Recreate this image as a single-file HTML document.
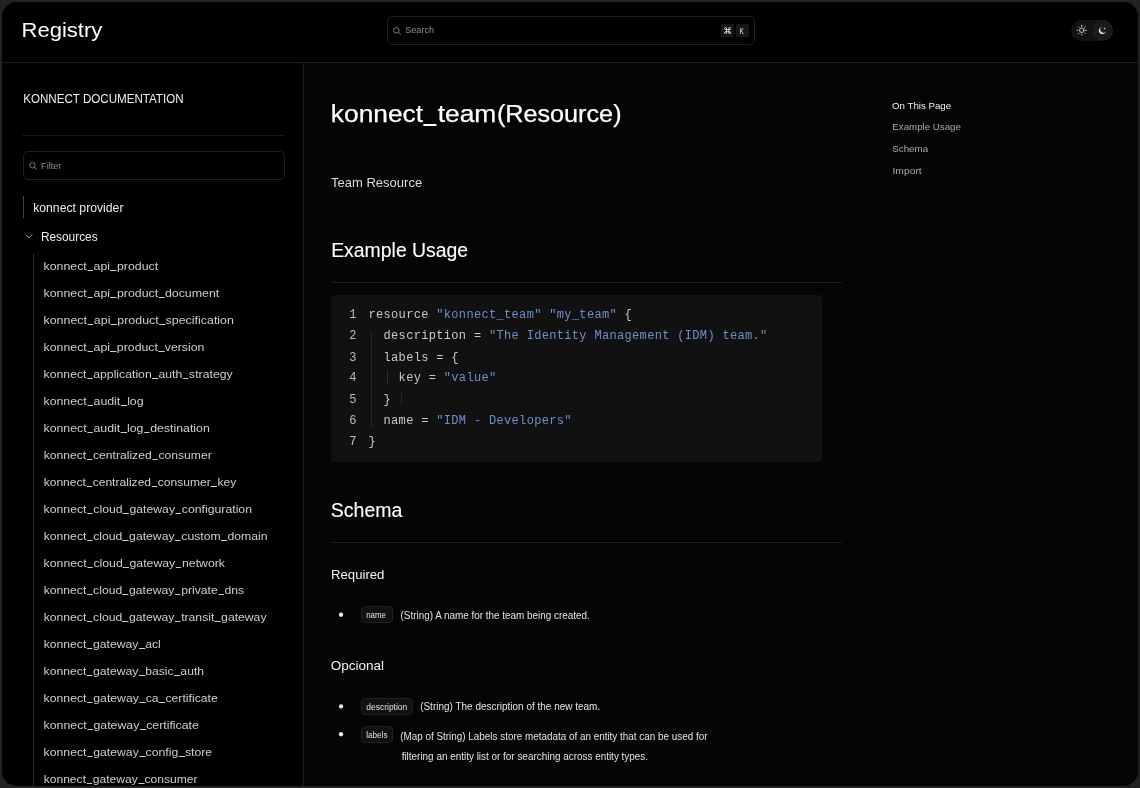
<!DOCTYPE html>
<html>
<head>
<meta charset="utf-8">
<style>
*{box-sizing:border-box;margin:0;padding:0}
html,body{width:1140px;height:788px;overflow:hidden;background:#222;font-family:"Liberation Sans",sans-serif;color:#fff}
#win{position:absolute;left:2px;top:2px;width:1136px;height:784px;border-radius:15px;background:#000;overflow:hidden}
#in{position:absolute;left:-2px;top:-2px;width:1140px;height:788px;will-change:transform}
.t{position:absolute;white-space:nowrap;line-height:20px;transform-origin:0 0}
#h1a,#h1b{-webkit-text-stroke:0.25px #fff}
#exu,#sch{-webkit-text-stroke:0.12px #fff}
.b{position:absolute}
.u{display:inline-block;width:.5em;margin:0 .028em;height:.085em;background:currentColor;position:relative;top:.07em}
#h1a .u{top:.18em}
#hdr{position:absolute;left:0;top:0;width:1140px;height:63px;border-bottom:1px solid #1d1d1d;background:#000}
#search{position:absolute;left:387px;top:16px;width:368px;height:29px;border:1px solid #202020;border-radius:5px}
.kbd{position:absolute;top:24px;width:13px;height:13px;background:#161616}
#toggle{position:absolute;left:1071px;top:20px;width:42px;height:21px;border-radius:10.5px;background:#121212}
#toggle .on{position:absolute;left:21px;top:0;width:21px;height:21px;border-radius:10.5px;background:#1b1b1b}
#side{position:absolute;left:0;top:63px;width:304px;height:725px;border-right:1px solid #1d1d1d;background:#000}
#main{position:absolute;left:304px;top:63px;width:836px;height:725px;background:#050505}
#sdiv{position:absolute;left:23px;top:135px;width:261px;height:1px;background:repeating-linear-gradient(90deg,#262626 0 1px,#0c0c0c 1px 2px)}
#filter{position:absolute;left:23px;top:151px;width:262px;height:29px;border:1px solid #202020;border-radius:5px}
.vline{position:absolute;width:1px;background:#333}
.hr{position:absolute;left:331px;width:511px;height:1px;background:repeating-linear-gradient(90deg,#212121 0 2px,#181818 2px 4px)}
#code{position:absolute;left:331px;top:295px;width:491px;height:167px;border-radius:4px;background:#111}
#code .ln,#code .cl{position:absolute;font-family:"Liberation Mono",monospace;font-size:12px;letter-spacing:0.33px;line-height:20px;white-space:pre;color:#c9c9c9}
#code .ln{color:#bcbcbc}
#code .s{color:#6c90cb}
.tag{position:absolute;height:17px;border:1px solid #1f1f1f;border-radius:3.5px;background:#111}
.dot{position:absolute;width:4.4px;height:4.4px;border-radius:2.2px;background:#f4f4f4}
</style>
</head>
<body>
<div id="win"><div id="in">
<div id="main"></div>
<div id="side"></div>
<div id="hdr"></div>
<div id="search"></div>
<svg class="b" style="left:392px;top:26px" width="10" height="10" viewBox="0 0 10 10"><circle cx="4.4" cy="4.3" r="2.75" fill="none" stroke="#909090" stroke-width="0.85"/><path d="M6.5 6.4 L8.5 8.3" stroke="#909090" stroke-width="0.85" stroke-linecap="round"/></svg>
<div class="kbd" style="left:721px"></div>
<div class="kbd" style="left:736px"></div>
<svg class="b" style="left:723.6px;top:26.8px" width="7.3" height="7.3" viewBox="0 0 7.6 7.6" fill="none" stroke="#ececec" stroke-width="0.8"><circle cx="1.6" cy="1.6" r="1.05"/><circle cx="6.0" cy="1.6" r="1.05"/><circle cx="1.6" cy="6.0" r="1.05"/><circle cx="6.0" cy="6.0" r="1.05"/><path d="M2.65 1.6V6.0M4.95 1.6V6.0M1.6 2.65H6.0M1.6 4.95H6.0"/></svg>
<div id="toggle"><div class="on"></div>
<svg class="b" style="left:0;top:0" width="42" height="21" viewBox="0 0 42 21" fill="none" stroke="#e6e6e6" stroke-width="0.85" stroke-linecap="round">
<circle cx="10.75" cy="10.25" r="2.25"/>
<path d="M14.65 10.25L15.50 10.25M13.51 13.01L14.11 13.61M10.75 14.15L10.75 15.00M7.99 13.01L7.39 13.61M6.85 10.25L6.00 10.25M7.99 7.49L7.39 6.89M10.75 6.65L10.75 5.15M13.51 7.49L14.11 6.89"/>
<path d="M29.96 7.42A3.45 3.45 0 1 0 34.48 11.94A3.2 3.2 0 0 1 29.96 7.42Z" fill="#e4e4e4" stroke="#e4e4e4" stroke-width="0.25" stroke-linejoin="round"/>
<circle cx="33.58" cy="8.50" r="0.8" fill="#e6e6e6" stroke="none"/>
</svg>
</div>

<div id="sdiv"></div>
<div id="filter"></div>
<svg class="b" style="left:28px;top:161px" width="10" height="10" viewBox="0 0 10 10"><circle cx="4.4" cy="4.3" r="2.75" fill="none" stroke="#909090" stroke-width="0.85"/><path d="M6.5 6.4 L8.5 8.3" stroke="#909090" stroke-width="0.85" stroke-linecap="round"/></svg>
<div class="vline" style="left:23px;top:196px;height:22px;background:#424242"></div>
<svg class="b" style="left:24px;top:233px" width="10" height="7" viewBox="0 0 10 7"><path d="M1.6 1.5L5 4.9L8.4 1.5" fill="none" stroke="#b0b0b0" stroke-width="0.9"/></svg>
<div class="vline" style="left:33px;top:253px;height:535px;background:#2c2c2c"></div>

<div class="hr" style="top:282px"></div>
<div id="code">
<div class="ln" style="left:18.3px;top:10.00px">1</div><div class="cl" style="left:37.5px;top:10.00px">resource <span class="s">"konnect_team"</span> <span class="s">"my_team"</span> {</div>
<div class="ln" style="left:18.3px;top:31.13px">2</div><div class="cl" style="left:37.5px;top:31.13px">  description = <span class="s">"The Identity Management (IDM) team."</span></div>
<div class="ln" style="left:18.3px;top:53.00px">3</div><div class="cl" style="left:37.5px;top:53.00px">  labels = {</div>
<div class="ln" style="left:18.3px;top:73.39px">4</div><div class="cl" style="left:37.5px;top:73.39px">    key = <span class="s">"value"</span></div>
<div class="ln" style="left:18.3px;top:94.52px">5</div><div class="cl" style="left:37.5px;top:94.52px">  }</div>
<div class="ln" style="left:18.3px;top:115.65px">6</div><div class="cl" style="left:37.5px;top:115.65px">  name = <span class="s">"IDM - Developers"</span></div>
<div class="ln" style="left:18.3px;top:136.78px">7</div><div class="cl" style="left:37.5px;top:136.78px">}</div>
<div class="vline" style="left:40px;top:36px;height:96px;background:#262626"></div>
<div class="vline" style="left:56px;top:75px;height:14px;background:#2e2e2e"></div>
<div class="vline" style="left:70px;top:98px;height:12px;background:#262626"></div>
</div>
<div class="hr" style="top:542px"></div>

<svg class="b" style="left:336px;top:610px" width="10" height="10"><circle cx="5.0" cy="4.75" r="2.15" fill="#f2f2f2"/></svg>
<div class="tag" style="left:361px;top:606px;width:32px"></div>
<svg class="b" style="left:336px;top:701px" width="10" height="10"><circle cx="5.05" cy="5.4" r="2.15" fill="#f2f2f2"/></svg>
<div class="tag" style="left:361px;top:698px;width:52px"></div>
<svg class="b" style="left:336px;top:729px" width="10" height="10"><circle cx="5.05" cy="5.25" r="2.15" fill="#f2f2f2"/></svg>
<div class="tag" style="left:361px;top:726px;width:32px"></div>

<div id="logo" class="t" style="left:21px;top:20.42px;font-size:21px;color:#fff;transform:translateX(0.58px) scaleX(1.0483)">Registry</div>
<div id="tsearch" class="t" style="left:405px;top:20.44px;font-size:9.7px;color:#8e8e8e;transform:translateX(0.19px) scaleX(0.9411)">Search</div>
<div id="kk" class="t" style="left:739px;top:20.77px;font-size:9.9px;color:#e8e8e8;transform:translateX(0.57px) scaleX(0.6545)">K</div>
<div id="kd" class="t" style="left:23px;top:88.94px;font-size:12.3px;color:#f0f0f0;transform:translateX(0.25px) scaleX(0.9421)">KONNECT DOCUMENTATION</div>
<div id="tfilter" class="t" style="left:41px;top:156.01px;font-size:9.5px;color:#8e8e8e;transform:translateX(0.00px) scaleX(0.9725)">Filter</div>
<div id="prov" class="t" style="left:33px;top:197.54px;font-size:12.0px;color:#ededed;transform:translateX(0.14px) scaleX(1.0184)">konnect provider</div>
<div id="res" class="t" style="left:40px;top:227.44px;font-size:12.3px;color:#ededed;transform:translateX(0.90px) scaleX(0.9657)">Resources</div>
<div id="h1a" class="t" style="left:330px;top:104.01px;font-size:24.2px;color:#fff;transform:translateX(0.83px) scaleX(1.0886)">konnect<i class="u"></i>team</div>
<div id="h1b" class="t" style="left:496px;top:104.01px;font-size:24.2px;color:#fff;transform:translateX(0.88px) scaleX(1.0419)">(Resource)</div>
<div id="team" class="t" style="left:331px;top:172.93px;font-size:13.2px;color:#dcdcdc;transform:translateX(0.03px) scaleX(0.9864)">Team Resource</div>
<div id="exu" class="t" style="left:331px;top:239.52px;font-size:20px;color:#fff;transform:translateX(0.17px) scaleX(0.9703)">Example Usage</div>
<div id="sch" class="t" style="left:330px;top:499.67px;font-size:20px;color:#fff;transform:translateX(0.78px) scaleX(0.9760)">Schema</div>
<div id="req" class="t" style="left:330px;top:564.52px;font-size:13.5px;color:#f2f2f2;transform:translateX(0.98px) scaleX(0.9752)">Required</div>
<div id="opc" class="t" style="left:330px;top:656.17px;font-size:13.5px;color:#f2f2f2;transform:translateX(0.74px) scaleX(0.9987)">Opcional</div>
<div id="p1" class="t" style="left:400px;top:605.83px;font-size:10px;color:#e2e2e2;transform:translateX(0.52px) scaleX(0.9902)">(String) A name for the team being created.</div>
<div id="p2" class="t" style="left:420px;top:697.03px;font-size:10px;color:#e2e2e2;transform:translateX(0.14px) scaleX(0.9976)">(String) The description of the new team.</div>
<div id="p3" class="t" style="left:400px;top:726.93px;font-size:10px;color:#e2e2e2;transform:translateX(0.15px) scaleX(0.9891)">(Map of String) Labels store metadata of an entity that can be used for</div>
<div id="p4" class="t" style="left:401px;top:746.83px;font-size:10px;color:#e2e2e2;transform:translateX(0.65px) scaleX(0.9918)">filtering an entity list or for searching across entity types.</div>
<div id="t1" class="t" style="left:366px;top:604.92px;font-size:8.6px;color:#e0e0e0;transform:translateX(0.24px) scaleX(0.9129)">name</div>
<div id="t2" class="t" style="left:366px;top:696.62px;font-size:8.6px;color:#e0e0e0;transform:translateX(0.31px) scaleX(0.9847)">description</div>
<div id="t3" class="t" style="left:366px;top:725.12px;font-size:8.6px;color:#e0e0e0;transform:translateX(0.24px) scaleX(0.9458)">labels</div>
<div id="toc0" class="t" style="left:892px;top:95.80px;font-size:9.8px;color:#f0f0f0;transform:translateX(0.05px) scaleX(0.9874)">On This Page</div>
<div id="toc1" class="t" style="left:892px;top:116.50px;font-size:9.8px;color:#a9a9a9;transform:translateX(0.29px) scaleX(0.9927)">Example Usage</div>
<div id="toc2" class="t" style="left:892px;top:138.95px;font-size:9.8px;color:#a9a9a9;transform:translateX(0.20px) scaleX(1.0005)">Schema</div>
<div id="toc3" class="t" style="left:892px;top:160.80px;font-size:9.8px;color:#a9a9a9;transform:translateX(0.47px) scaleX(1.0523)">Import</div>
<div id="it0" class="t" style="left:43px;top:256.02px;font-size:11.5px;color:#cdcdcd;transform:translateX(0.48px) scaleX(1.0741)">konnect<i class="u"></i>api<i class="u"></i>product</div>
<div id="it1" class="t" style="left:43px;top:283.02px;font-size:11.5px;color:#cdcdcd;transform:translateX(0.48px) scaleX(1.0738)">konnect<i class="u"></i>api<i class="u"></i>product<i class="u"></i>document</div>
<div id="it2" class="t" style="left:43px;top:310.02px;font-size:11.5px;color:#cdcdcd;transform:translateX(0.48px) scaleX(1.0794)">konnect<i class="u"></i>api<i class="u"></i>product<i class="u"></i>specification</div>
<div id="it3" class="t" style="left:43px;top:337.02px;font-size:11.5px;color:#cdcdcd;transform:translateX(0.62px) scaleX(1.0706)">konnect<i class="u"></i>api<i class="u"></i>product<i class="u"></i>version</div>
<div id="it4" class="t" style="left:43px;top:364.02px;font-size:11.5px;color:#cdcdcd;transform:translateX(0.62px) scaleX(1.0636)">konnect<i class="u"></i>application<i class="u"></i>auth<i class="u"></i>strategy</div>
<div id="it5" class="t" style="left:43px;top:391.02px;font-size:11.5px;color:#cdcdcd;transform:translateX(0.48px) scaleX(1.0729)">konnect<i class="u"></i>audit<i class="u"></i>log</div>
<div id="it6" class="t" style="left:43px;top:418.02px;font-size:11.5px;color:#cdcdcd;transform:translateX(0.48px) scaleX(1.0708)">konnect<i class="u"></i>audit<i class="u"></i>log<i class="u"></i>destination</div>
<div id="it7" class="t" style="left:43px;top:445.02px;font-size:11.5px;color:#cdcdcd;transform:translateX(0.63px) scaleX(1.0566)">konnect<i class="u"></i>centralized<i class="u"></i>consumer</div>
<div id="it8" class="t" style="left:43px;top:472.02px;font-size:11.5px;color:#cdcdcd;transform:translateX(0.63px) scaleX(1.0505)">konnect<i class="u"></i>centralized<i class="u"></i>consumer<i class="u"></i>key</div>
<div id="it9" class="t" style="left:43px;top:499.02px;font-size:11.5px;color:#cdcdcd;transform:translateX(0.62px) scaleX(1.0652)">konnect<i class="u"></i>cloud<i class="u"></i>gateway<i class="u"></i>configuration</div>
<div id="it10" class="t" style="left:43px;top:526.02px;font-size:11.5px;color:#cdcdcd;transform:translateX(0.63px) scaleX(1.0615)">konnect<i class="u"></i>cloud<i class="u"></i>gateway<i class="u"></i>custom<i class="u"></i>domain</div>
<div id="it11" class="t" style="left:43px;top:553.02px;font-size:11.5px;color:#cdcdcd;transform:translateX(0.62px) scaleX(1.0667)">konnect<i class="u"></i>cloud<i class="u"></i>gateway<i class="u"></i>network</div>
<div id="it12" class="t" style="left:43px;top:580.02px;font-size:11.5px;color:#cdcdcd;transform:translateX(0.63px) scaleX(1.0599)">konnect<i class="u"></i>cloud<i class="u"></i>gateway<i class="u"></i>private<i class="u"></i>dns</div>
<div id="it13" class="t" style="left:43px;top:607.02px;font-size:11.5px;color:#cdcdcd;transform:translateX(0.63px) scaleX(1.0598)">konnect<i class="u"></i>cloud<i class="u"></i>gateway<i class="u"></i>transit<i class="u"></i>gateway</div>
<div id="it14" class="t" style="left:43px;top:634.02px;font-size:11.5px;color:#cdcdcd;transform:translateX(0.63px) scaleX(1.0589)">konnect<i class="u"></i>gateway<i class="u"></i>acl</div>
<div id="it15" class="t" style="left:43px;top:661.02px;font-size:11.5px;color:#cdcdcd;transform:translateX(0.62px) scaleX(1.0592)">konnect<i class="u"></i>gateway<i class="u"></i>basic<i class="u"></i>auth</div>
<div id="it16" class="t" style="left:43px;top:688.02px;font-size:11.5px;color:#cdcdcd;transform:translateX(0.62px) scaleX(1.0644)">konnect<i class="u"></i>gateway<i class="u"></i>ca<i class="u"></i>certificate</div>
<div id="it17" class="t" style="left:43px;top:715.02px;font-size:11.5px;color:#cdcdcd;transform:translateX(0.62px) scaleX(1.0696)">konnect<i class="u"></i>gateway<i class="u"></i>certificate</div>
<div id="it18" class="t" style="left:43px;top:742.02px;font-size:11.5px;color:#cdcdcd;transform:translateX(0.62px) scaleX(1.0634)">konnect<i class="u"></i>gateway<i class="u"></i>config<i class="u"></i>store</div>
<div id="it19" class="t" style="left:43px;top:769.02px;font-size:11.5px;color:#cdcdcd;transform:translateX(0.63px) scaleX(1.0519)">konnect<i class="u"></i>gateway<i class="u"></i>consumer</div>
</div></div>
</body>
</html>
